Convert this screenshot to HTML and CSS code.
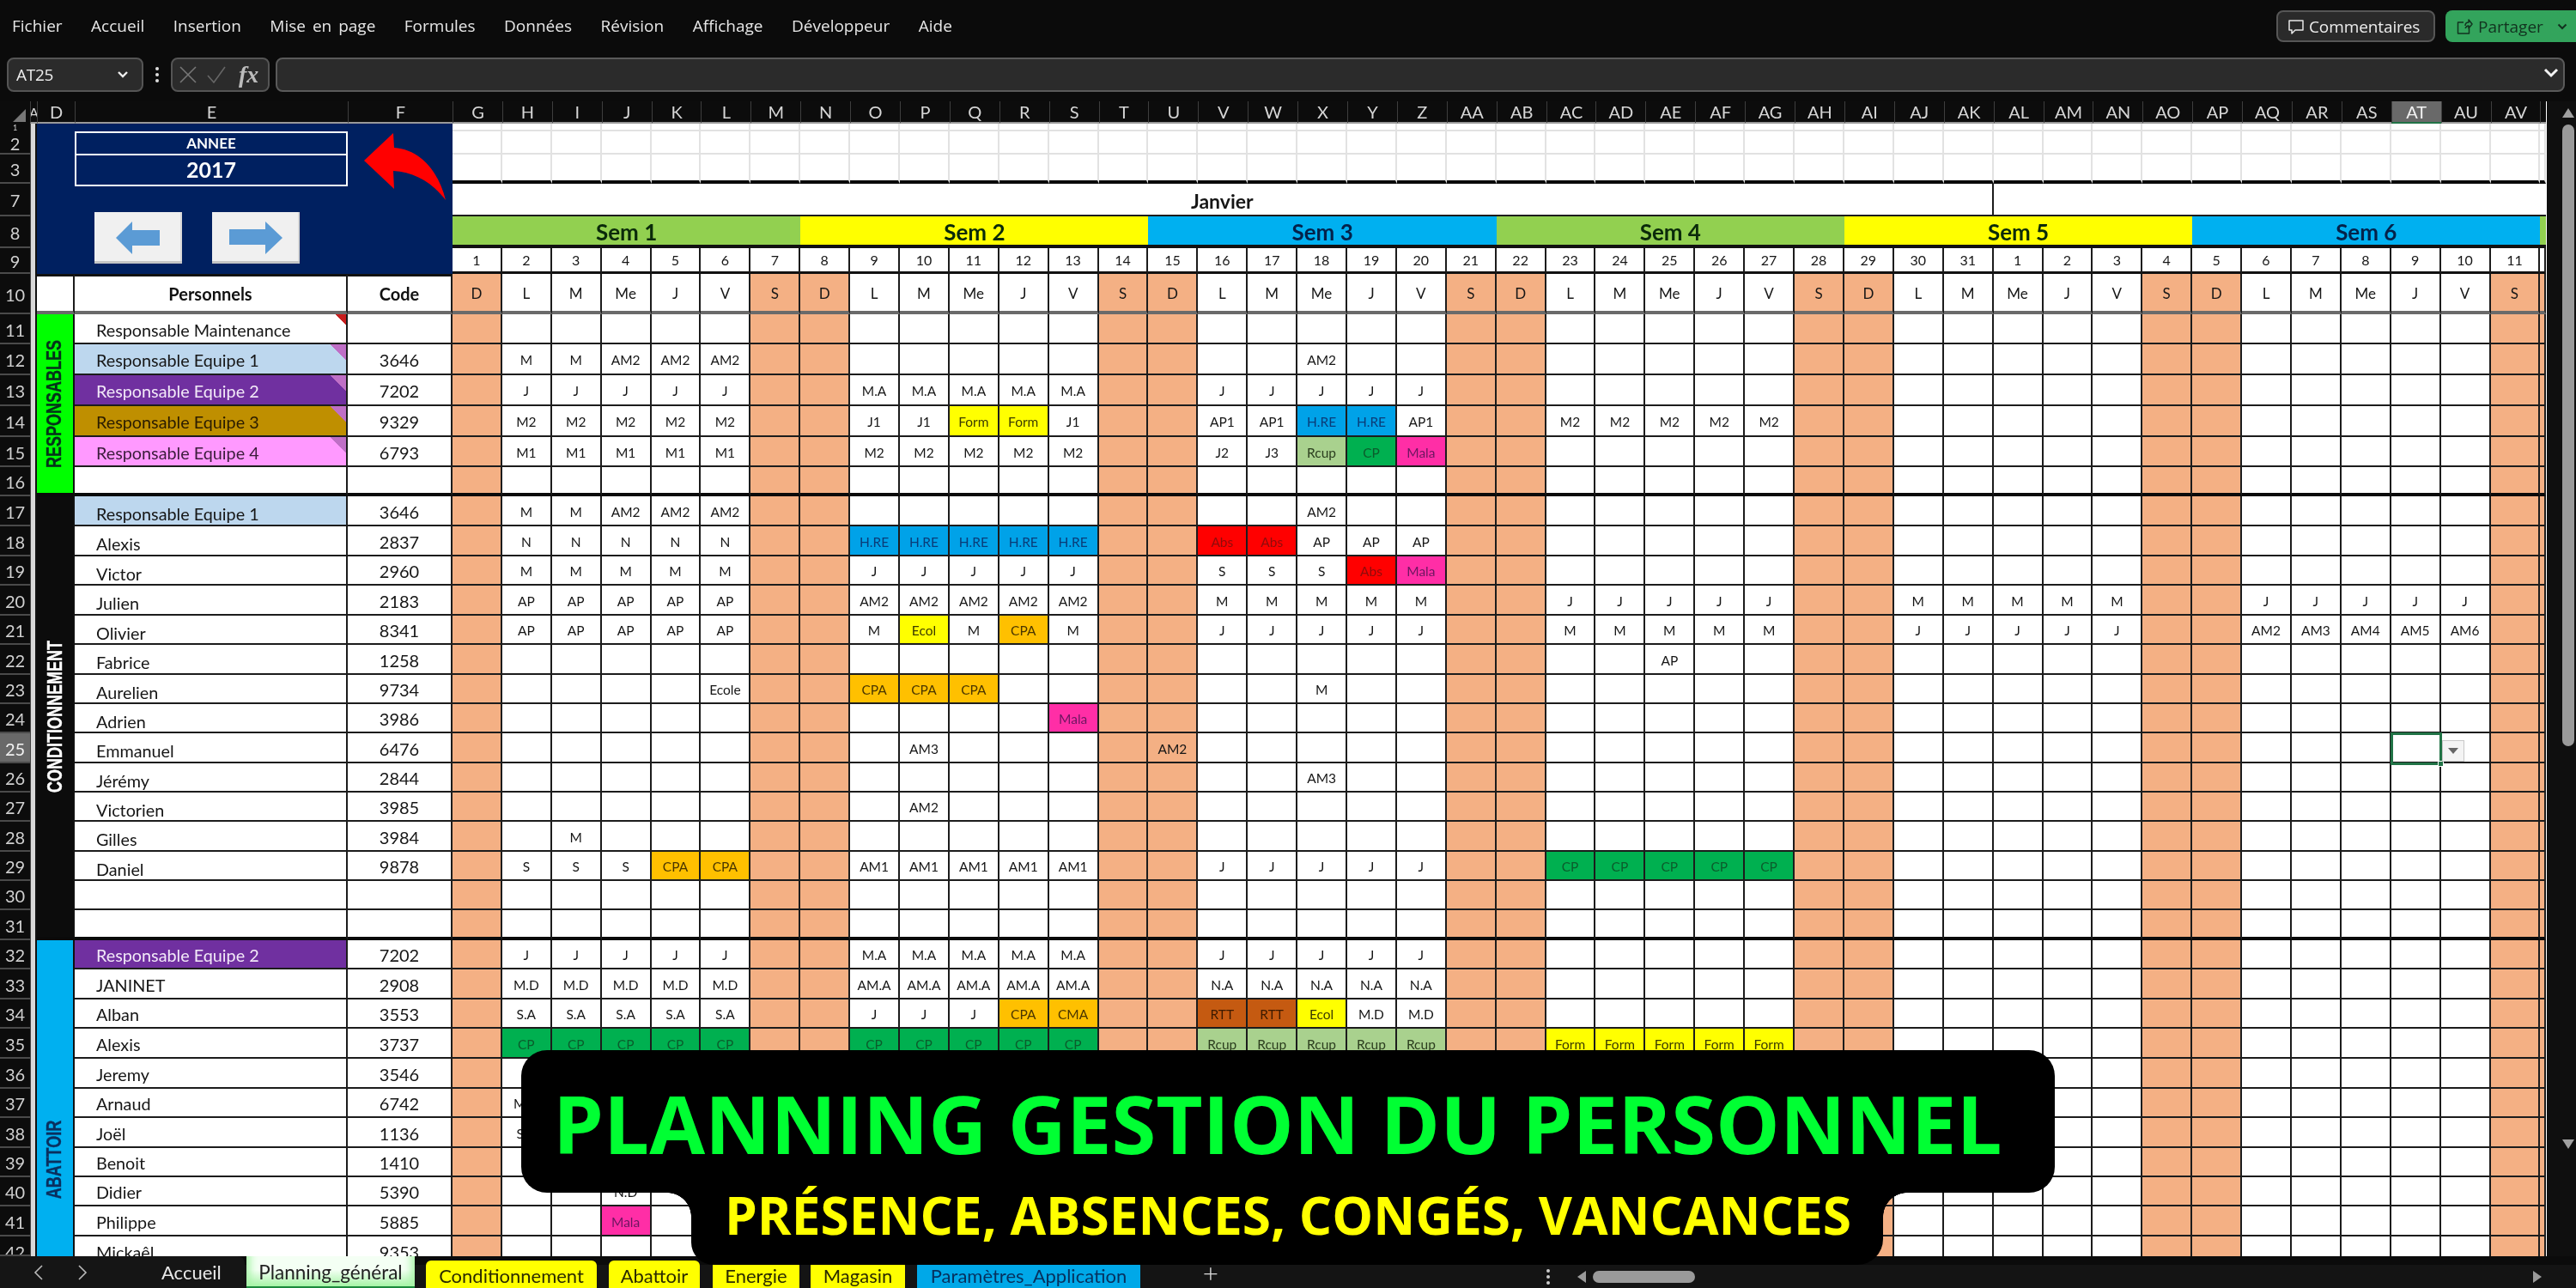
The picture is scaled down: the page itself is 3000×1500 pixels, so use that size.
FILE: index.html
```html
<!DOCTYPE html>
<html lang="fr">
<head>
<meta charset="utf-8">
<title>Planning gestion du personnel</title>
<link rel="stylesheet" href="styles.css">
</head>
<body>
<div class="app">
  <header class="topbar">
    <nav class="menu">
      <span>Fichier</span><span>Accueil</span><span>Insertion</span><span>Mise en page</span><span>Formules</span><span>Données</span><span>Révision</span><span>Affichage</span><span>Développeur</span><span>Aide</span>
    </nav>
    <div class="actions">
      <button class="btn-comments">
        <svg width="20" height="20" viewBox="0 0 20 20" fill="none" stroke="#e8e8e8" stroke-width="1.5"><path d="M2 3h16v11H9l-4 4v-4H2z" stroke-linejoin="round"/></svg>
        <span>Commentaires</span>
      </button>
      <button class="btn-share">
        <svg width="20" height="20" viewBox="0 0 20 20" fill="none" stroke="#12321f" stroke-width="1.5"><path d="M9 5H2.500v13h13v-6M11 9c0-3 2-4 4-4V2l4 5-4 5V9c-2 0-3 1-4 3" stroke-linejoin="round"/></svg>
        <span>Partager</span>
        <svg class="share-chev" width="12" height="8" viewBox="0 0 12 8" fill="none" stroke="#12321f" stroke-width="2"><path d="M1.500 1.500 6 6l4.500-4.500"/></svg>
      </button>
    </div>
  </header>

  <section class="formula">
    <div class="namebox"><span>AT25</span>
      <svg width="14" height="10" viewBox="0 0 14 10" fill="none" stroke="#eee" stroke-width="2.400"><path d="M2 2l5 5 5-5"/></svg>
    </div>
    <div class="formula-dots"><i></i><i></i><i></i></div>
    <div class="fxbox">
      <svg width="22" height="24" viewBox="0 0 22 24" fill="none" stroke="#777" stroke-width="1.600"><path d="M2 3l18 18M20 3L2 21"/></svg>
      <svg width="24" height="24" viewBox="0 0 24 24" fill="none" stroke="#666" stroke-width="1.600"><path d="M2 13l7 8L22 3"/></svg>
      <em>fx</em>
    </div>
    <div class="fxinput">
      <svg width="18" height="12" viewBox="0 0 18 12" fill="none" stroke="#f2f2f2" stroke-width="3"><path d="M2 2l7 7 7-7"/></svg>
    </div>
  </section>

  <main class="workarea">
    <div class="sheet" id="sheet"></div>
    <aside class="vscroll">
      <i class="tri-up"></i>
      <div class="vthumb"></div>
      <i class="tri-down"></i>
    </aside>
  </main>

  <footer class="tabbar">
    <div class="tabnav">
      <svg width="12" height="20" viewBox="0 0 12 20" fill="none" stroke="#bbb" stroke-width="1.600"><path d="M10 2L2 10l8 8"/></svg>
      <svg width="12" height="20" viewBox="0 0 12 20" fill="none" stroke="#bbb" stroke-width="1.600"><path d="M2 2l8 8-8 8"/></svg>
      <span class="tab-home">Accueil</span>
    </div>
    <div class="tab-active">Planning_général</div>
    <div class="tab tab-cond">Conditionnement</div>
    <div class="tab tab-aba">Abattoir</div>
    <div class="tab tab-ene">Energie</div>
    <div class="tab tab-mag">Magasin</div>
    <div class="tab tab-par">Paramètres_Application</div>
    <div class="tab-plus">+</div>
    <div class="tab-dots"><i></i><i></i><i></i></div>
    <div class="hscroll">
      <i class="tri-left"></i>
      <div class="hthumb"></div>
      <i class="tri-right"></i>
    </div>
  </footer>

  <div class="banner">
    <div class="banner-main">PLANNING GESTION DU PERSONNEL</div>
    <div class="banner-sub">PRÉSENCE, ABSENCES, CONGÉS, VANCANCES</div>
  </div>
</div>
<script src="app.js"></script>
</body>
</html>
```

FILE: styles.css
```css
* { box-sizing: border-box; }
html, body { margin: 0; padding: 0; background: #0b0b0b; }
.app { position: relative; width: 3000px; height: 1500px; overflow: hidden; display: flex; flex-direction: column; background: #0b0b0b; font-family: "Open Sans", "Noto Sans", sans-serif; color: #e8e8e8; filter: blur(0.4px); }

/* Top bar */
.topbar { height: 56px; flex: none; display: flex; justify-content: space-between; align-items: flex-start; padding: 12px 0 0 14px; }
.menu { display: flex; gap: 33.500px; font-size: 19px; word-spacing: 3px; line-height: 37px; color: #e6e6e6; }
.actions { display: flex; gap: 12px; }
.btn-comments, .btn-share { height: 37px; border-radius: 8px; display: flex; align-items: center; font: 400 19px "Open Sans", sans-serif; padding: 0; }
.btn-comments { width: 185px; background: #2a2a2a; border: 2px solid #565656; color: #ececec; gap: 5px; padding-left: 11px; letter-spacing: -0.1px; }
.btn-share { width: 152px; background: #33a45c; border: 0; color: #12321f; gap: 6px; padding-left: 12px; border-radius: 8px 0 0 8px; }
.share-chev { margin-left: 10px; }

/* Formula bar */
.formula { height: 62px; flex: none; display: flex; align-items: flex-start; padding: 11px 0 0 8px; }
.namebox { width: 159px; height: 40px; background: #2b2b2b; border: 2px solid #555; border-radius: 8px; display: flex; align-items: center; justify-content: space-between; padding: 0 15px 0 9px; font-size: 19px; color: #eee; letter-spacing: -0.3px; }
.formula-dots { width: 32px; height: 40px; display: flex; flex-direction: column; align-items: center; justify-content: center; gap: 3px; }
.formula-dots i { width: 4px; height: 4px; background: #ddd; border-radius: 50%; }
.fxbox { width: 115px; height: 40px; background: #2b2b2b; border: 2px solid #555; border-radius: 8px; display: flex; align-items: center; gap: 10px; padding-left: 7px; }
.fxbox em { font: italic 700 28px "Liberation Serif", serif; color: #bbb; margin-left: 4px; line-height: 30px; }
.fxinput { width: 2666px; height: 40px; margin-left: 7px; background: #2b2b2b; border: 2px solid #5a5a5a; border-radius: 8px; display: flex; align-items: center; justify-content: flex-end; padding: 0 5px 4px 0; }

/* Worksheet */
.workarea { height: 1345px; flex: none; display: flex; }
.sheet { width: 2966px; height: 1345px; flex: none; overflow: hidden; background: #fff; display: grid; font-family: Lato, sans-serif; color: #161616;
  grid-template-columns: 35px 8px 44px 318px 122px repeat(42, 57.9px) 7px;
  grid-template-rows: 26px 9px 27px 34px 38px 37px 30px 47px
    35px 36px 36px 36px 35px 34px 35px 35px 34px 35px
    34px 35px 34px 34px 35px 34px 34px 35px 34px 34px 35px
    34px 35px 34px 35px 35px 34px 35px 34px 34px 35px 23px; }
.corner { background: #0c0c0c; display: flex; align-items: flex-end; justify-content: flex-end; padding: 0 5px 2px 0; }
.corner i { width: 0; height: 0; border-left: 15px solid transparent; border-bottom: 15px solid #777; }
.colhead { background: #0c0c0c; color: #d6d6d6; font-size: 20px; display: flex; align-items: center; justify-content: center; border-left: 1px solid #3e3e3e; border-bottom: 2px solid #999; overflow: hidden; }
.colhead.hl { background: #696969; color: #f2f2f2; border-bottom: 2px solid #217346; }
.colhead.narrow { font-size: 16px; border-bottom: 2px solid #999; }
.rowhead { background: #0c0c0c; color: #d0d0d0; font-size: 20px; display: flex; align-items: center; justify-content: center; border-bottom: 2px solid #4a4a4a; overflow: hidden; padding-top: 2px; }
.rowhead.hl { background: #696969; color: #f2f2f2; }
.rowhead.tiny { font-size: 9px; line-height: 9px; padding-top: 0; border-bottom: 0; }
.rowhead.clip { align-items: flex-start; padding-top: 6px; }
.strip { background: #d9d9d9; border-right: 2px solid #111; border-left: 1px solid #444; }
.navy { grid-column: span 3; grid-row: span 6; background: #002060; display: flex; flex-direction: column; padding: 9px 0 0 44px; }
.navy-top { height: 94px; display: flex; align-items: flex-start; }
.year { width: 318px; flex: none; display: flex; flex-direction: column; color: #fff; font-weight: 700; text-align: center; }
.year-label { height: 28px; border: 2px solid #fff; font-size: 17px; line-height: 24px; }
.year-value { height: 36px; border: 2px solid #fff; border-top: 0; font-size: 25px; line-height: 33px; }
.navy-arrow { margin: 2px 0 0 19px; flex: none; }
.navy-btns { display: flex; gap: 35px; padding-left: 23px; align-items: flex-start; }
.navbtn { width: 102px; height: 60px; background: #f0f0f0; box-shadow: inset 0 -3px 0 #c5c5c5, inset -2px 0 0 #d8d8d8; display: flex; align-items: center; justify-content: center; }

.band { grid-row-end: span 6; display: flex; align-items: center; justify-content: center; overflow: hidden; border-right: 2px solid #111; }
.band b { display: block; white-space: nowrap; font: 700 18px "Liberation Sans", sans-serif; -webkit-text-stroke: 0.3px currentColor; transform: rotate(-90deg) scaleY(1.35); }
.band-res { background: #00ff00; color: #05321a; border-bottom: 4px solid #0a0a0a; }
.band-con { grid-row-end: span 15; background: #0c0c0c; color: #fff; border-bottom: 4px solid #0a0a0a; }
.band-aba { grid-row-end: span 11; background: #00b0f0; color: #0a2f5e; align-items: flex-start; }
.band-aba b { margin-top: 245px; }

.cell { border-right: 2px solid #1c1c1c; border-bottom: 2px solid #1c1c1c; display: flex; align-items: center; justify-content: center; font-size: 15.5px; overflow: hidden; white-space: nowrap; background: #fff; min-width: 0; padding-top: 2px; }
.cell.light { border-color: #e2e2e2; padding-top: 0; }
.cell.thick3 { border-bottom: 4px solid #0a0a0a; }
.cell.off { background: #f4b084; }
.cell.thick { border-bottom: 4px solid #0a0a0a; }
.cell.freeze { border-bottom: 4px solid #6a6a6a; }
.cell.low { padding-top: 7px; }
.cell.clip { align-items: flex-start; padding-top: 6px; border-bottom: 0; }
.cell.title { grid-column: span 31; font-size: 23px; font-weight: 700; border-right: 2px solid #1c1c1c; padding-top: 4px; }
.cell.title-rest { grid-column: span 12; border-right: 0; }
.cell.sem { grid-column: span 7; font-size: 26px; font-weight: 700; border-right: 0; border-bottom: 4px solid #111; }
.cell.sem-last { grid-column: span 1; font-size: 1px; border-right: 0; border-bottom: 4px solid #111; }
.sem-g { background: #92d050; color: #0a2a0a; }
.sem-y { background: #ffff00; color: #0a2a0a; }
.sem-b { background: #00b0f0; color: #04224a; }
.cell.num { font-size: 16px; border-bottom: 3px solid #111; padding-top: 0; }
.cell.wday { font-size: 17px; }
.cell.head { font-size: 20px; font-weight: 700; color: #111; border-top: 3px solid #111; border-bottom: 4px solid #6a6a6a; padding-top: 0; }
.cell.name { justify-content: flex-start; padding-left: 25px; font-size: 19.8px; background-repeat: no-repeat; }
.cell.code { font-size: 20px; }
.note-red { background-image: linear-gradient(225deg, #c81e1e 9px, transparent 9px); }
.note-vio { background-image: linear-gradient(225deg, #bf6fc6 13px, transparent 13px); }
.n-blue { background-color: #bdd7ee; }
.n-purple { background-color: #7030a0; color: #f2e9f8; }
.n-gold { background-color: #bf8f00; color: #2a1c00; }
.n-pink { background-color: #ff99ff; color: #3a1c3a; }
.t-form { background: #ffff00; color: #3b3b00; }
.t-hre { background: #00a2e8; color: #0a3c78; }
.t-rcup { background: #a9d18e; color: #2b3d1e; }
.t-cp { background: #00b050; color: #0b5c2c; }
.t-mala { background: #ff2ea6; color: #6d1660; }
.t-abs { background: #ff0000; color: #8f0b0b; }
.t-cpa { background: #ffc000; color: #4a3600; }
.t-rtt { background: #c55a11; color: #3d1a00; }
.cell.sel { overflow: visible; position: relative; z-index: 2; }
.sel-box { position: absolute; left: -1px; top: -1px; width: 60px; height: 38px; border: 3px solid #217346; }
.sel-handle { position: absolute; left: 54px; top: 32px; width: 7px; height: 7px; background: #217346; border: 1px solid #fff; }
.sel-drop { position: absolute; left: 59px; top: 8px; width: 26px; height: 25px; background: #f4f4f4; border: 1px solid #c8c8c8; display: flex; align-items: center; justify-content: center; }
.sel-drop i { width: 0; height: 0; border-left: 6px solid transparent; border-right: 6px solid transparent; border-top: 7px solid #666; }

/* Scrollbars */
.vscroll { width: 34px; flex: none; display: flex; flex-direction: column; align-items: center; padding: 8px 0 0 16px; background: #0f0f0f; }
.tri-up { width: 0; height: 0; border-left: 7px solid transparent; border-right: 7px solid transparent; border-bottom: 11px solid #a0a0a0; flex: none; }
.vthumb { width: 14px; height: 724px; background: #9a9a9a; border-radius: 7px; margin-top: 8px; flex: none; }
.tri-down { width: 0; height: 0; border-left: 7px solid transparent; border-right: 7px solid transparent; border-top: 11px solid #a0a0a0; flex: none; margin-top: 458px; }

/* Sheet tabs */
.tabbar { height: 37px; flex: none; display: flex; align-items: flex-end; font-family: Lato, sans-serif; font-size: 22px; background: linear-gradient(#0b0b0b 10px, #141414 10px); }
.tabnav { width: 285px; height: 37px; background: #151515; border-radius: 0 8px 0 0; display: flex; align-items: center; padding-left: 39px; gap: 39px; flex: none; }
.tab-home { color: #e8e8e8; margin-left: 47px; }
.tab-active { width: 196px; height: 37px; margin-left: 2px; flex: none; background: linear-gradient(#f4fff4 45%, #a6f4a6); color: #222; display: flex; align-items: flex-start; justify-content: center; padding-top: 5px; border-bottom: 2px solid #1b8a3c; font-size: 22.5px; box-shadow: inset 14px 0 10px -10px #a6f4a6, inset -14px 0 10px -10px #a6f4a6; }
.tab { height: 32px; flex: none; background: #ffff00; color: #2a2a00; display: flex; align-items: center; justify-content: center; border-radius: 6px 6px 0 0; padding-top: 3px; }
.tab-cond { width: 199px; margin-left: 13px; }
.tab-aba { width: 106px; margin-left: 14px; }
.tab-ene { width: 101px; margin-left: 15px; }
.tab-mag { width: 110px; margin-left: 13px; }
.tab-par { width: 260px; margin-left: 14px; background: #00a8e8; color: #06315e; }
.tab-plus { width: 164px; text-align: center; color: #d8d8d8; font-size: 32px; line-height: 30px; height: 32px; flex: none; font-family: "Open Sans", sans-serif; font-weight: 300; }
.tab-dots { width: 66px; height: 27px; display: flex; flex-direction: column; align-items: center; justify-content: center; gap: 3px; flex: none; margin-left: 278px; }
.tab-dots i { width: 4px; height: 4px; background: #ccc; border-radius: 50%; }
.hscroll { width: 1126px; height: 27px; flex: none; display: flex; align-items: center; }
.tri-left { width: 0; height: 0; border-top: 7px solid transparent; border-bottom: 7px solid transparent; border-right: 10px solid #9a9a9a; margin-left: 1px; }
.hthumb { width: 119px; height: 14px; border-radius: 7px; background: #9a9a9a; margin-left: 8px; }
.tri-right { width: 0; height: 0; border-top: 7px solid transparent; border-bottom: 7px solid transparent; border-left: 10px solid #9a9a9a; margin-left: 976px; }

/* Banner overlay */
.banner { position: absolute; left: 607px; top: 1223px; width: 1786px; display: flex; flex-direction: column; z-index: 5; font-family: "Open Sans", sans-serif; font-weight: 700; }
.banner-main { height: 166px; background: #000; border-radius: 30px; color: #00ff33; font-size: 94px; line-height: 1; padding: 38px 0 0 37px; white-space: nowrap; }
.banner-sub { position: relative; margin-left: 198px; width: 1388px; height: 84px; background: #000; border-radius: 0 0 30px 26px; color: #ffff00; font-size: 60.3px; line-height: 53px; padding: 0 0 0 39px; white-space: nowrap; }
.banner-sub::before, .banner-sub::after { content: ""; position: absolute; top: 0; width: 28px; height: 28px; }
.banner-sub::before { left: -28px; background: radial-gradient(circle at 0 100%, transparent 27.500px, #000 28px); }
.banner-sub::after { right: -28px; background: radial-gradient(circle at 100% 100%, transparent 27.500px, #000 28px); }
```

FILE: app.js
```js
(function () {
  var COLS = ["G","H","I","J","K","L","M","N","O","P","Q","R","S","T","U","V","W","X","Y","Z","AA","AB","AC","AD","AE","AF","AG","AH","AI","AJ","AK","AL","AM","AN","AO","AP","AQ","AR","AS","AT","AU","AV","AW"];
  var WD = ["D","L","M","Me","J","V","S"];
  var STYLE = { Form:"t-form", Ecol:"t-form", "H.RE":"t-hre", Rcup:"t-rcup", CP:"t-cp", Mala:"t-mala", Abs:"t-abs", CPA:"t-cpa", CMA:"t-cpa", RTT:"t-rtt" };
  var RE1 = "2-3:M 4-6:AM2 18:AM2";
  var RE2 = "2-6:J 9-13:M.A 16-20:J";
  var DATA = {
    11:["Responsable Maintenance","","note-red",""],
    12:["Responsable Equipe 1","3646","n-blue note-vio",RE1],
    13:["Responsable Equipe 2","7202","n-purple note-vio",RE2],
    14:["Responsable Equipe 3","9329","n-gold note-vio","2-6:M2 9-10:J1 11-12:Form 13:J1 16-17:AP1 18-19:H.RE 20:AP1 23-27:M2"],
    15:["Responsable Equipe 4","6793","n-pink note-vio","2-6:M1 9-13:M2 16:J2 17:J3 18:Rcup 19:CP 20:Mala"],
    16:["","","",""],
    17:["Responsable Equipe 1","3646","n-blue",RE1],
    18:["Alexis","2837","","2-6:N 9-13:H.RE 16-17:Abs 18-20:AP"],
    19:["Victor","2960","","2-6:M 9-13:J 16-18:S 19:Abs 20:Mala"],
    20:["Julien","2183","","2-6:AP 9-13:AM2 16-20:M 23-27:J 30-34:M 37-41:J"],
    21:["Olivier","8341","","2-6:AP 9:M 10:Ecol 11:M 12:CPA 13:M 16-20:J 23-27:M 30-34:J 37:AM2 38:AM3 39:AM4 40:AM5 41:AM6"],
    22:["Fabrice","1258","","25:AP"],
    23:["Aurelien","9734","","6:Ecole 9-11:CPA 18:M"],
    24:["Adrien","3986","","13:Mala"],
    25:["Emmanuel","6476","","10:AM3 15:AM2"],
    26:["Jérémy","2844","","18:AM3"],
    27:["Victorien","3985","","10:AM2"],
    28:["Gilles","3984","","3:M"],
    29:["Daniel","9878","","2-4:S 5-6:CPA 9-13:AM1 16-20:J 23-27:CP"],
    30:["","","",""],
    31:["","","",""],
    32:["Responsable Equipe 2","7202","n-purple",RE2],
    33:["JANINET","2908","","2-6:M.D 9-13:AM.A 16-20:N.A"],
    34:["Alban","3553","","2-6:S.A 9-11:J 12:CPA 13:CMA 16-17:RTT 18:Ecol 19-20:M.D"],
    35:["Alexis","3737","","2-6:CP 9-13:CP 16-20:Rcup 23-27:Form"],
    36:["Jeremy","3546","",""],
    37:["Arnaud","6742","","2:M.D"],
    38:["Joël","1136","","2:S.A"],
    39:["Benoit","1410","",""],
    40:["Didier","5390","","4:N.D"],
    41:["Philippe","5885","","4:Mala"],
    42:["Mickaêl","9353","",""]
  };
  var BANDS = {
    11:["band-res","RESPONSABLES"],
    17:["band-con","CONDITIONNEMENT"],
    32:["band-aba","ABATTOIR"]
  };
  var html = [];
  function div(cls, text) { html.push('<div class="' + cls + '">' + (text || "") + "</div>"); }
  function parse(spec) {
    var map = {};
    spec.split(" ").forEach(function (p) {
      if (!p) return;
      var kv = p.split(":"), r = kv[0].split("-"), a = +r[0], b = +(r[1] || r[0]);
      for (var d = a; d <= b; d++) map[d - 1] = kv[1];
    });
    return map;
  }
  function isOff(i) { return i % 7 === 0 || i % 7 === 6; }

  /* column header row */
  html.push('<div class="corner"><i></i></div>');
  div("colhead narrow", "A");
  div("colhead", "D"); div("colhead", "E"); div("colhead", "F");
  COLS.forEach(function (c) { div("colhead" + (c === "AT" ? " hl" : ""), c === "AW" ? "" : c); });

  /* header rows of the sheet */
  function head(label, extra) { div("rowhead" + (extra ? " " + extra : ""), label); div("strip"); }
  function lightRow() { COLS.forEach(function () { div("cell light"); }); }

  head("1", "tiny");
  html.push(
    '<div class="navy"><div class="navy-top"><div class="year"><div class="year-label">ANNEE</div><div class="year-value">2017</div></div>' +
    '<svg class="navy-arrow" width="96" height="79" viewBox="0 0 96 79"><path fill="#ff0000" d="M0 32 34 0 35 17C64 19 86 42 95 78 80 58 58 45 34 44L35 65Z"/></svg></div>' +
    '<div class="navy-btns"><div class="navbtn"><svg width="52" height="38" viewBox="0 0 52 38"><path fill="#5b9bd5" d="M0 19 19 0V10H51V28H19V38Z"/></svg></div>' +
    '<div class="navbtn"><svg width="62" height="38" viewBox="0 0 62 38"><path fill="#5b9bd5" d="M62 19 42 0V9H0V27H42V38Z"/></svg></div></div></div>'
  );
  lightRow();
  head("2"); lightRow();
  head("3");
  COLS.forEach(function () { div("cell light thick3"); });
  head("7");
  div("cell title", "Janvier"); div("cell title-rest");
  head("8");
  var sems = [["sem-g","Sem 1"],["sem-y","Sem 2"],["sem-b","Sem 3"],["sem-g","Sem 4"],["sem-y","Sem 5"],["sem-b","Sem 6"]];
  sems.forEach(function (s) { div("cell sem " + s[0], s[1]); });
  div("cell sem-last sem-g");
  head("9");
  COLS.forEach(function (c, i) { div("cell num", i === 42 ? "" : String(i < 31 ? i + 1 : i - 30)); });
  head("10");
  div("cell head"); div("cell head", "Personnels"); div("cell head", "Code");
  COLS.forEach(function (c, i) { div("cell wday freeze" + (isOff(i) ? " off" : ""), i === 42 ? "" : WD[i % 7]); });

  /* people rows */
  for (var r = 11; r <= 42; r++) {
    var row = DATA[r], map = parse(row[3]);
    var thick = (r === 16 || r === 31) ? " thick" : "";
    var clip = r === 42 ? " clip" : "";
    var low = (r >= 17 && r <= 29) ? " low" : "";
    head(String(r), (r === 25 ? "hl" : "") + (r === 42 ? " clip" : ""));
    if (BANDS[r]) {
      html.push('<div class="band ' + BANDS[r][0] + '"><b>' + BANDS[r][1] + "</b></div>");
    }
    div("cell name " + row[2] + thick + clip + low, row[0]);
    div("cell code" + thick + clip, row[1]);
    COLS.forEach(function (c, i) {
      var v = map[i], cls = "cell" + thick + clip;
      if (isOff(i)) cls += " off";
      if (v && STYLE[v]) cls += " " + STYLE[v];
      if (r === 25 && c === "AT") {
        html.push('<div class="cell sel"><span class="sel-box"></span><span class="sel-handle"></span><span class="sel-drop"><i></i></span></div>');
      } else {
        div(cls, v || "");
      }
    });
  }
  document.getElementById("sheet").innerHTML = html.join("");
})();
```
